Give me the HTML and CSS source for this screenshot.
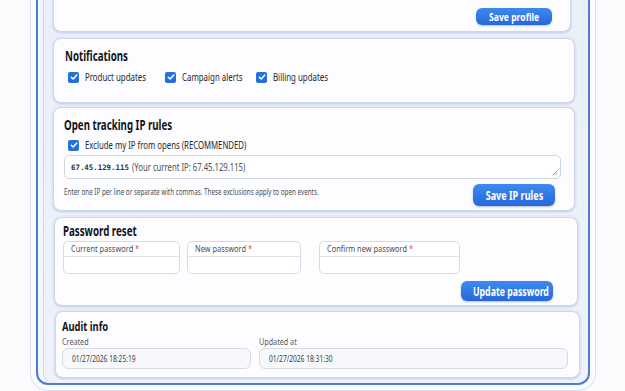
FILE: index.html
```html
<!DOCTYPE html>
<html lang="en">
<head>
<meta charset="utf-8">
<title>Settings</title>
<link rel="stylesheet" href="styles.css">
</head>
<body>
<div class="frame">
  <section class="card card-profile">
    <div class="actions"><button class="btn btn-profile"><span class="bt">Save profile</span></button></div>
  </section>

  <section class="card card-notif">
    <h2 class="title">Notifications</h2>
    <div class="checks">
      <label class="check"><span class="box"><svg viewBox="0 0 10 10"><path d="M2.3 5.2 4.2 7 7.8 3" /></svg></span><span class="t">Product updates</span></label>
      <label class="check"><span class="box"><svg viewBox="0 0 10 10"><path d="M2.3 5.2 4.2 7 7.8 3" /></svg></span><span class="t">Campaign alerts</span></label>
      <label class="check"><span class="box"><svg viewBox="0 0 10 10"><path d="M2.3 5.2 4.2 7 7.8 3" /></svg></span><span class="t">Billing updates</span></label>
    </div>
  </section>

  <section class="card card-ip">
    <h2 class="title">Open tracking IP rules</h2>
    <label class="check check-ip"><span class="box"><svg viewBox="0 0 10 10"><path d="M2.3 5.2 4.2 7 7.8 3" /></svg></span><span class="t">Exclude my IP from opens (RECOMMENDED)</span></label>
    <div class="textarea">
      <span class="mono">67.45.129.115</span><span class="t hint">(Your current IP: 67.45.129.115)</span>
      <svg class="grip" viewBox="0 0 8 8"><path d="M7 2 2 7M7 5 5 7" /></svg>
    </div>
    <div class="ip-foot">
      <p class="help">Enter one IP per line or separate with commas. These exclusions apply to open events.</p>
      <button class="btn btn-ip"><span class="bt">Save IP rules</span></button>
    </div>
  </section>

  <section class="card card-pw">
    <h2 class="title">Password reset</h2>
    <div class="fields">
      <div class="field f1"><div class="flabel"><span class="t">Current password <span class="req">*</span></span></div><div class="finput"></div></div>
      <div class="field f2"><div class="flabel"><span class="t">New password <span class="req">*</span></span></div><div class="finput"></div></div>
      <div class="field f3"><div class="flabel"><span class="t">Confirm new password <span class="req">*</span></span></div><div class="finput"></div></div>
    </div>
    <div class="actions"><button class="btn btn-pw"><span class="bt">Update password</span></button></div>
  </section>

  <section class="card card-audit">
    <h2 class="title">Audit info</h2>
    <div class="audit-grid">
      <div class="acol"><div class="alabel">Created</div><div class="ainput"><span class="t">01/27/2026 18:25:19</span></div></div>
      <div class="acol"><div class="alabel">Updated at</div><div class="ainput"><span class="t">01/27/2026 18:31:30</span></div></div>
    </div>
  </section>
</div>
</body>
</html>
```

FILE: styles.css
```css
* { box-sizing: border-box; }

html, body {
  margin: 0;
  height: 100%;
  overflow: hidden;
}

body {
  background: #fbfbfe;
  font-family: "Noto Sans", "Open Sans", sans-serif;
  color: #23262d;
}

/* the reference renders text horizontally condensed */
.t {
  display: inline-block;
  white-space: nowrap;
  transform: scaleX(var(--sx, 0.75));
  transform-origin: 0 50%;
}
.bt {
  display: inline-block;
  white-space: nowrap;
  transform: scaleX(var(--sx, 0.78));
  transform-origin: 50% 50%;
}

.frame {
  margin-left: 36px;
  width: 554px;
  border: 2px solid #4f7bd2;
  border-top: none;
  border-radius: 0 0 12px 12px;
  background: linear-gradient(180deg, #eaf0fa 0%, #edf2fb 100%);
  padding: 0 13px 5px 15px;
  display: flex;
  flex-direction: column;
  box-shadow: 0 0 0 5px #fbfcff, 0 0 0 6px #d9e2f3, inset 5px 0 0 #f3f6fc, inset 6px 0 0 #c8d5ee;
}

.card {
  background: #fdfdff;
  border: 1px solid #cdd6ea;
  border-radius: 8px;
  box-shadow: 0 1px 2px rgba(70, 90, 150, 0.18), 0 0 0 2px rgba(226, 233, 247, 0.8);
}

.title {
  margin: 0;
  font-size: 13.5px;
  line-height: 16px;
  font-weight: 700;
  color: #111318;
  white-space: nowrap;
  transform: scaleX(0.72);
  transform-origin: 0 50%;
}

/* profile (cut off at top) */
.card-profile {
  margin-top: -20px;
  height: 52px;
  padding: 27px 20px 0 0;
  margin-right: 4px;
}
.card-profile .actions {
  display: flex;
  justify-content: flex-end;
}

.btn {
  border: none;
  border-radius: 6px;
  background: linear-gradient(180deg, #3d8aef 0%, #2668db 100%);
  color: #fff;
  font-family: inherit;
  font-weight: 700;
  padding: 0;
  white-space: nowrap;
  box-shadow: 0 1px 2px rgba(20, 50, 120, 0.3);
}

.btn-profile {
  width: 76px;
  height: 17px;
  font-size: 11px;
  line-height: 17px;
  margin-right: -2px;
}

/* notifications */
.card-notif {
  margin-top: 6px;
  height: 65px;
  padding: 9px 12px 0 11px;
}
.checks {
  margin-top: 7px;
  margin-left: 3px;
  display: flex;
}
.check {
  display: flex;
  align-items: center;
  font-size: 10.5px;
  line-height: 12px;
  color: #24272e;
  white-space: nowrap;
}
.checks .check:nth-child(1) { width: 97px; }
.checks .check:nth-child(2) { width: 91px; }

.box {
  width: 11px;
  height: 11px;
  border-radius: 2px;
  background: #2670de;
  margin-right: 6px;
  display: flex;
  align-items: center;
  justify-content: center;
  flex: none;
}
.box svg {
  width: 10px;
  height: 10px;
  fill: none;
  stroke: #fff;
  stroke-width: 1.5;
  stroke-linecap: round;
  stroke-linejoin: round;
}

/* ip rules */
.card-ip {
  margin-top: 4px;
  height: 104px;
  padding: 9px 13px 0 10px;
}
.check-ip {
  margin-top: 6px;
  margin-left: 4px;
  --sx: 0.74;
}

.textarea {
  position: relative;
  margin-top: 4px;
  height: 24px;
  border: 1px solid #cfd6e3;
  border-radius: 5px;
  background: #fff;
  padding: 0 6px;
  display: flex;
  align-items: center;
  gap: 3px;
  font-size: 10px;
  color: #3b3f48;
  white-space: nowrap;
}
.mono {
  font-family: "DejaVu Sans Mono", "Liberation Mono", monospace;
  font-weight: 700;
  font-size: 7.4px;
  color: #2d3038;
}
.hint { color: #4a4e57; --sx: 0.77; }
.grip {
  position: absolute;
  right: 2px;
  bottom: 2px;
  width: 7px;
  height: 7px;
  fill: none;
  stroke: #666;
  stroke-width: 0.9;
}

.ip-foot {
  margin-top: 5px;
  display: flex;
  justify-content: space-between;
  align-items: flex-start;
  padding-right: 6px;
}
.help {
  margin: 2px 0 0;
  font-size: 8.5px;
  line-height: 11px;
  color: #4a4e57;
  white-space: nowrap;
  transform: scaleX(0.74);
  transform-origin: 0 50%;
}
.btn-ip {
  flex: none;
  width: 82px;
  height: 22px;
  font-size: 11.5px;
  --sx: 0.79;
}

/* password */
.card-pw {
  margin-top: 6px;
  height: 89px;
  padding: 5px 24px 0 8px;
  margin-right: -3px;
  margin-left: 1px;
}
.fields {
  margin-top: 2px;
  display: flex;
}
.field {
  height: 33px;
  border: 1px solid #d6dbe6;
  border-radius: 5px;
  background: #fff;
  display: flex;
  flex-direction: column;
}
.f1 { width: 117px; }
.f2 { width: 114px; margin-left: 7px; }
.f3 { width: 141px; margin-left: 18px; }
.flabel {
  height: 15px;
  border-bottom: 1px solid #dde1ea;
  padding: 0 7px;
  font-size: 9.5px;
  line-height: 14px;
  color: #4b4f58;
  white-space: nowrap;
  --sx: 0.78;
}
.req { color: #e0474c; }
.finput { flex: 1; }

.card-pw .actions {
  margin-top: 7px;
  display: flex;
  justify-content: flex-end;
}
.btn-pw {
  width: 92px;
  height: 20px;
  font-size: 11.5px;
  --sx: 0.76;
}

/* audit */
.card-audit {
  margin-top: 5px;
  height: 67px;
  padding: 7px 11px 0 6px;
  margin-left: 2px;
  margin-right: -5px;
}
.card-audit .title { line-height: 14px; font-size: 13px; }
.audit-grid {
  margin-top: 4px;
  display: grid;
  grid-template-columns: 189px 1fr;
  column-gap: 8px;
}
.alabel {
  height: 10px;
  font-size: 9px;
  line-height: 10px;
  color: #555a63;
  white-space: nowrap;
  transform: scaleX(0.8);
  transform-origin: 0 50%;
}
.ainput {
  height: 21px;
  margin-top: 1px;
  border: 1px solid #d6dbe6;
  border-radius: 6px;
  background: #f7f8fb;
  padding: 0 9px;
  font-size: 9px;
  line-height: 19px;
  color: #3a3e46;
  --sx: 0.74;
}
```
